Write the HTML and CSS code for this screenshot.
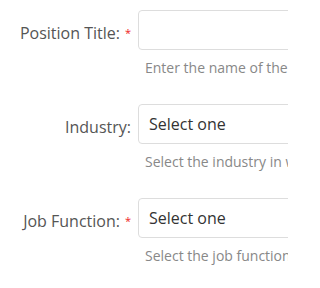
FILE: index.html
```html
<!DOCTYPE html>
<html>
<head>
<meta charset="utf-8">
<link rel="stylesheet" href="styles.css">
</head>
<body>
<form class="form">
  <div class="row">
    <label class="label">Position Title:<span class="req">*</span></label>
    <div class="control">
      <div class="input"></div>
      <div class="hint">Enter the name of the position you are hiring for</div>
    </div>
  </div>
  <div class="row">
    <label class="label">Industry:</label>
    <div class="control">
      <div class="input">Select one</div>
      <div class="hint">Select the industry in which this position falls</div>
    </div>
  </div>
  <div class="row">
    <label class="label">Job Function:<span class="req">*</span></label>
    <div class="control">
      <div class="input">Select one</div>
      <div class="hint">Select the job function that best describes this role</div>
    </div>
  </div>
</form>
</body>
</html>
```
FILE: styles.css
```css
html, body {
  margin: 0;
  padding: 0;
  background: #fff;
  overflow: hidden;
}
body {
  font-family: "Open Sans", "Noto Sans", sans-serif;
  color: #555;
}
.form {
  padding-top: 10px;
  width: 288px;
  overflow: hidden;
}
.row {
  display: grid;
  grid-template-columns: 131px 1fr;
  column-gap: 7px;
  margin-bottom: 27px;
}
.label {
  font-size: 16px;
  line-height: 40px;
  padding-top: 3px;
  text-align: right;
  color: #555;
  white-space: nowrap;
}
.req {
  color: #e22;
  font-size: 11px;
  margin-left: 5px;
  position: relative;
  top: -2px;
}
.control {
  min-width: 0;
  overflow: hidden;
}
.input {
  box-sizing: border-box;
  width: 400px;
  height: 40px;
  border: 1px solid #ddd;
  border-radius: 4px;
  padding: 0 10px;
  font-size: 16px;
  line-height: 38px;
  color: #333;
}
.hint {
  margin-top: 9px;
  padding-left: 7px;
  font-size: 14px;
  line-height: 18px;
  color: #888;
  white-space: nowrap;
}
```
